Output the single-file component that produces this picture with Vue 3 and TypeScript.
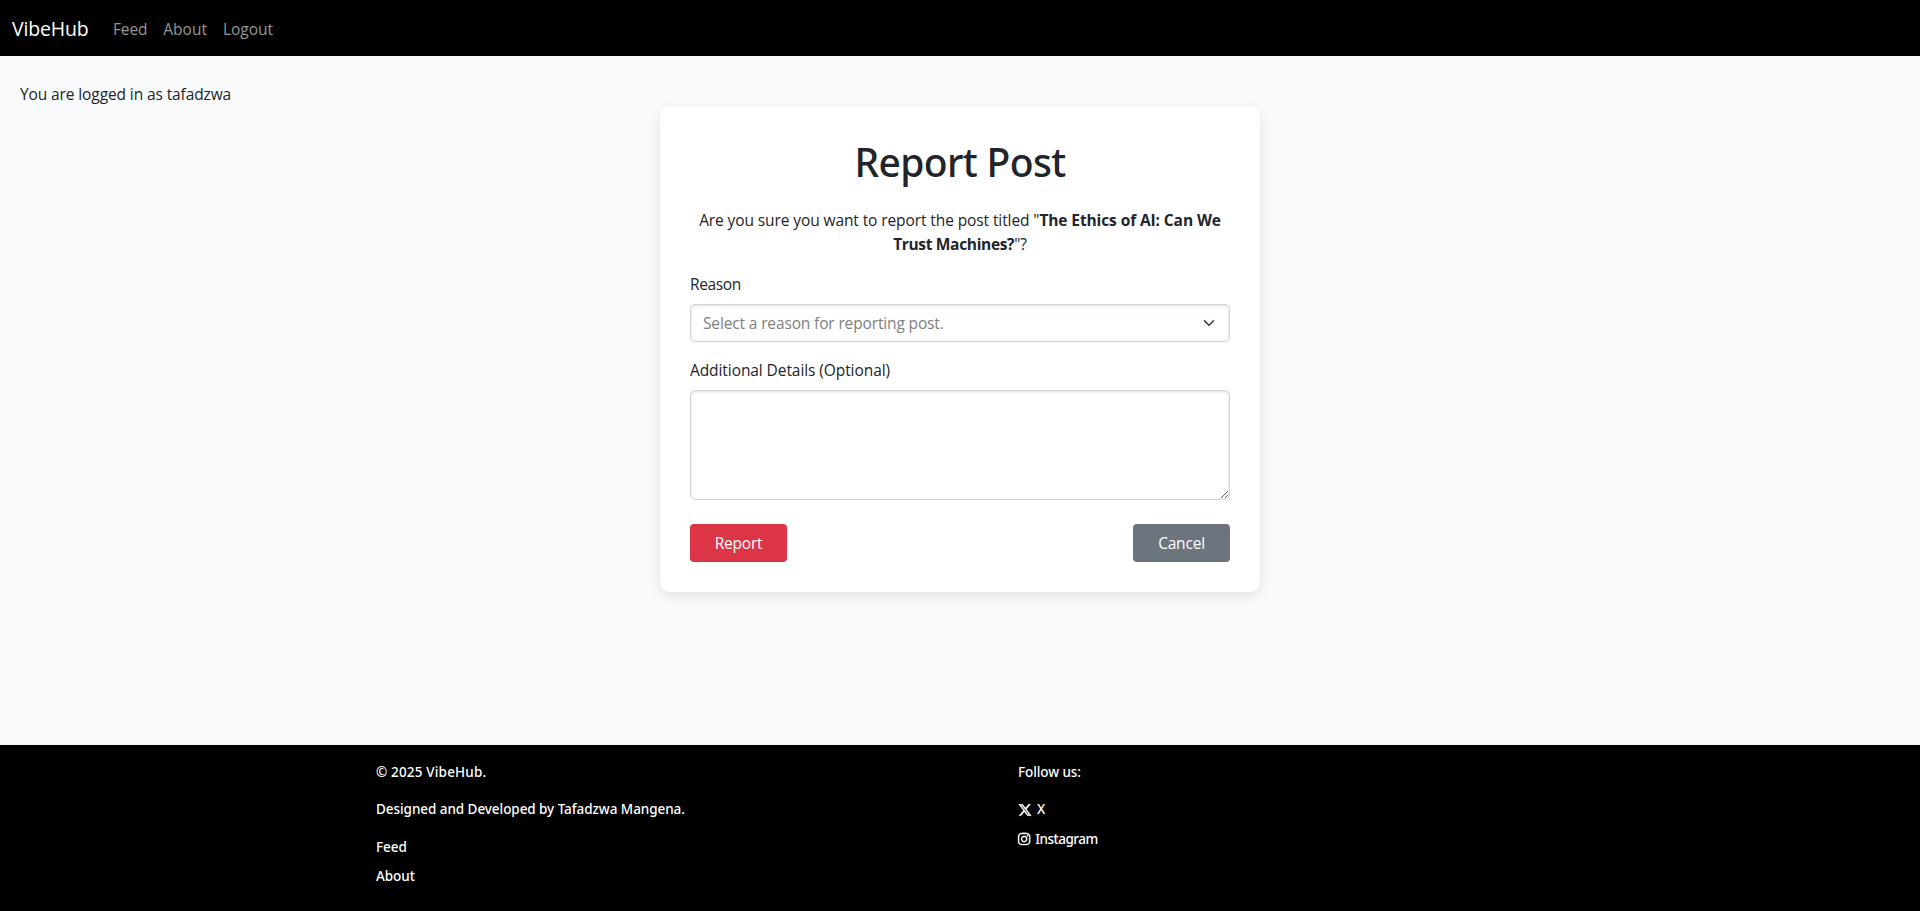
<script setup lang="ts">
import { ref } from 'vue'

interface NavLink {
  label: string
  tight?: boolean
}

const username = 'tafadzwa'
const navLinks: NavLink[] = [{ label: 'Feed', tight: true }, { label: 'About' }, { label: 'Logout' }]
const footerLinks: string[] = ['Feed', 'About']
const reasons: string[] = ['Spam', 'Harassment', 'Misinformation', 'Other']

const reason = ref('')
const details = ref('')
</script>

<template>
  <div class="page">
    <nav class="navbar">
      <a class="brand" href="#">VibeHub</a>
      <ul class="nav-list">
        <li v-for="link in navLinks" :key="link.label">
          <a class="nav-link" :class="{ tight: link.tight }" href="#">{{ link.label }}</a>
        </li>
      </ul>
    </nav>

    <main class="main">
      <p class="status">You are logged in as {{ username }}</p>

      <section class="card">
        <h1 class="title">Report Post</h1>
        <p class="question">
          Are you sure you want to report the post titled "<strong>The Ethics of AI: Can We <span class="second-line">Trust Machines?</span></strong>"?
        </p>
        <form @submit.prevent>
          <label class="label reason-label" for="reason">Reason</label>
          <div class="select-wrap">
            <select id="reason" v-model="reason" class="field select">
              <option value="" disabled>Select a reason for reporting post.</option>
              <option v-for="item in reasons" :key="item" :value="item">{{ item }}</option>
            </select>
            <svg class="chevron" viewBox="0 0 16 16" aria-hidden="true">
              <path d="m2 5 6 6 6-6" />
            </svg>
          </div>
          <label class="label details-label" for="details">Additional Details (Optional)</label>
          <textarea id="details" v-model="details" class="field textarea" rows="4"></textarea>
          <div class="actions">
            <button class="btn danger" type="submit">Report</button>
            <button class="btn secondary" type="button">Cancel</button>
          </div>
        </form>
      </section>
    </main>

    <footer class="footer">
      <div class="footer-col">
        <p class="footer-text copyright">© 2025 VibeHub.</p>
        <p class="footer-text">Designed and Developed by Tafadzwa Mangena.</p>
        <ul class="footer-links">
          <li v-for="label in footerLinks" :key="label"><a href="#">{{ label }}</a></li>
        </ul>
      </div>
      <div class="footer-col">
        <p class="footer-text follow">Follow us:</p>
        <ul class="social">
          <li>
            <a href="#">
              <svg class="icon-x" viewBox="0 0 512 512" aria-hidden="true">
                <path d="M389.2 48h70.6L305.6 224.2 487 464H345L233.7 318.6 106.5 464H35.8L200.7 275.5 26.8 48H172.4L272.9 180.9 389.2 48zM364.4 421.8h39.1L151.1 88h-42L364.4 421.8z" />
              </svg>
              <span>X</span>
            </a>
          </li>
          <li>
            <a href="#">
              <svg class="icon-ig" viewBox="0 0 448 512" aria-hidden="true">
                <path d="M224.1 141c-63.6 0-114.9 51.3-114.9 114.9s51.3 114.9 114.9 114.9S339 319.5 339 255.9 287.7 141 224.1 141zm0 189.6c-41.1 0-74.7-33.5-74.7-74.7s33.5-74.7 74.7-74.7 74.7 33.5 74.7 74.7-33.6 74.7-74.7 74.7zm146.4-194.3c0 14.9-12 26.8-26.8 26.8-14.9 0-26.8-12-26.8-26.8s12-26.8 26.8-26.8 26.8 12 26.8 26.8zm76.1 27.2c-1.7-35.9-9.9-67.7-36.2-93.9-26.2-26.2-58-34.4-93.9-36.2-37-2.1-147.9-2.1-184.9 0-35.8 1.7-67.6 9.9-93.9 36.1s-34.4 58-36.2 93.9c-2.1 37-2.1 147.9 0 184.9 1.7 35.9 9.9 67.7 36.2 93.9s58 34.4 93.9 36.2c37 2.1 147.9 2.1 184.9 0 35.9-1.7 67.7-9.9 93.9-36.2 26.2-26.2 34.4-58 36.2-93.9 2.1-37 2.1-147.8 0-184.8zM398.8 388c-7.8 19.6-22.9 34.7-42.6 42.6-29.5 11.7-99.5 9-132.1 9s-102.7 2.6-132.1-9c-19.6-7.8-34.7-22.9-42.6-42.6-11.7-29.5-9-99.5-9-132.1s-2.6-102.7 9-132.1c7.8-19.6 22.9-34.7 42.6-42.6 29.5-11.7 99.5-9 132.1-9s102.7-2.6 132.1 9c19.6 7.8 34.7 22.9 42.6 42.6 11.7 29.5 9 99.5 9 132.1s2.7 102.7-9 132.1z" />
              </svg>
              <span class="ig-label">Instagram</span>
            </a>
          </li>
        </ul>
      </div>
    </footer>
  </div>
</template>

<style>
body {
  margin: 0;
  background: #f8fafc;
}
</style>

<style scoped>
*,
*::before,
*::after {
  box-sizing: border-box;
}

.page {
  display: flex;
  flex-direction: column;
  min-height: 100vh;
  background: #f8fafc;
  color: #212529;
  font-family: "Open Sans", "Noto Sans", sans-serif;
  font-size: 15.5px;
  line-height: 24px;
}

p,
h1,
ul {
  margin: 0;
  padding: 0;
}

ul {
  list-style: none;
}

a {
  color: inherit;
  text-decoration: none;
}

.navbar {
  display: flex;
  align-items: center;
  gap: 17px;
  height: 56px;
  padding: 1px 12px 0;
  background: #000;
}

.brand {
  width: 76px;
  padding-top: 1px;
  color: #fff;
  font-size: 19.5px;
  letter-spacing: -0.15px;
  line-height: 30px;
  white-space: nowrap;
}

.nav-list {
  display: flex;
}

.nav-link {
  display: block;
  padding: 8px;
  color: #969696;
}

.nav-link.tight {
  letter-spacing: -0.15px;
}

.main {
  flex: 1;
  padding-top: 26px;
}

.status {
  padding-left: 20px;
  letter-spacing: -0.11px;
}

.card {
  width: 600px;
  margin: 0 auto;
  padding: 30px;
  border-radius: 10px;
  background: #fff;
  box-shadow: 0 4px 12px rgba(0, 0, 0, 0.1);
}

.title {
  margin-bottom: 22px;
  padding-top: 2px;
  font-family: "Noto Sans", "Open Sans", sans-serif;
  font-size: 39px;
  font-weight: 500;
  letter-spacing: -0.65px;
  line-height: 48px;
  text-align: center;
}

.question {
  margin-bottom: 16px;
  letter-spacing: -0.1px;
  text-align: center;
}

.question strong {
  font-weight: 700;
}

.second-line {
  letter-spacing: -0.33px;
}

.label {
  display: block;
  margin-bottom: 8px;
}

.reason-label {
  letter-spacing: -0.35px;
}

.details-label {
  letter-spacing: -0.08px;
}

.field {
  display: block;
  width: 100%;
  margin: 0;
  border: 1px solid #ced4da;
  border-radius: 5px;
  outline: 0;
  background: #fff;
  box-shadow: inset 0 1px 3px rgba(0, 0, 0, 0.12);
  color: #212529;
  font: inherit;
}

.select-wrap {
  display: grid;
  align-items: center;
  margin-bottom: 16px;
}

.select-wrap > * {
  grid-area: 1 / 1;
}

.select {
  height: 38px;
  padding: 6px 36px 6px 12px;
  appearance: none;
  color: #808080;
  letter-spacing: -0.14px;
}

.chevron {
  justify-self: end;
  width: 16px;
  height: 12px;
  margin-right: 13px;
  fill: none;
  stroke: #343a40;
  stroke-linecap: round;
  stroke-linejoin: round;
  stroke-width: 2;
  pointer-events: none;
}

.textarea {
  height: 110px;
  padding: 6px 12px;
  resize: vertical;
}

.actions {
  display: flex;
  justify-content: space-between;
  margin-top: 24px;
}

.btn {
  width: 97px;
  height: 38px;
  padding: 0;
  border: 0;
  border-radius: 4px;
  color: #fff;
  font: inherit;
  letter-spacing: -0.2px;
}

.danger {
  background: #dc3545;
}

.secondary {
  background: #6c757d;
}

.footer {
  display: grid;
  grid-template-columns: 642px 1fr;
  height: 166px;
  padding: 17px 0 0 376px;
  background: #000;
  color: #fff;
  font-family: "Noto Sans", "Open Sans", sans-serif;
  font-size: 13.5px;
  font-weight: 500;
  letter-spacing: -0.06px;
  line-height: 21px;
}

.footer-text {
  margin-bottom: 16px;
}

.copyright {
  letter-spacing: 0.17px;
}

.follow {
  letter-spacing: -0.08px;
}

.footer-links {
  display: flex;
  flex-direction: column;
  gap: 8px;
  padding-top: 1px;
}

.social {
  display: flex;
  flex-direction: column;
  gap: 9px;
}

.social a {
  display: flex;
  align-items: center;
  gap: 5px;
}

.social svg {
  fill: #fff;
  stroke: #fff;
  stroke-width: 14;
  overflow: visible;
}

.icon-x {
  width: 14px;
  height: 14px;
}

.icon-ig {
  width: 12.25px;
  height: 14px;
  margin-bottom: 2px;
}

.ig-label {
  letter-spacing: -0.5px;
}
</style>
